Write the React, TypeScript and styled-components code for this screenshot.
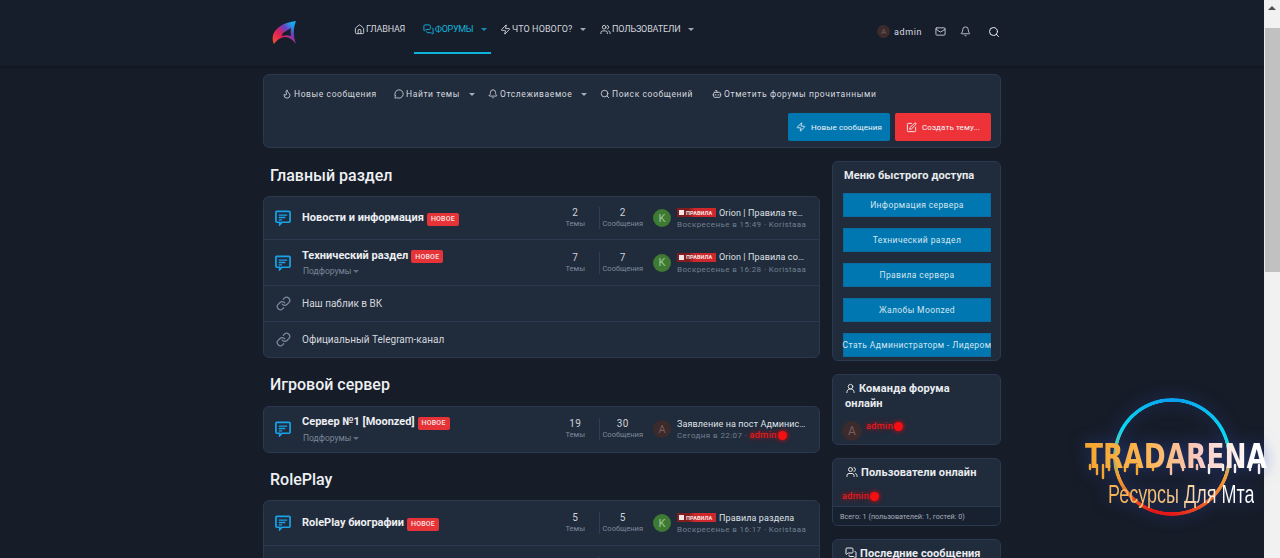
import styled, { createGlobalStyle } from 'styled-components';
import {
  Bell,
  Bot,
  Flame,
  Home,
  Link,
  Mail,
  MessageCircle,
  MessagesSquare,
  Search,
  SquarePen,
  UserRound,
  Users,
  Zap,
} from 'lucide-react';

const GlobalStyle = createGlobalStyle`
  html, body {
    height: 100%;
    overflow: hidden;
    background: #161c28;
  }
  body {
    margin: 0;
    font-family: Roboto, "Liberation Sans", sans-serif;
    color: #e6e8ec;
  }
  * { box-sizing: border-box; }
  svg { flex: none; }
`;

const Shell = styled.div`
  height: 100vh;
  display: flex;
  overflow: hidden;
`;

const Viewport = styled.div`
  flex: 1;
  min-width: 0;
  overflow: hidden;
`;

const ScrollTrack = styled.div`
  flex: none;
  width: 16px;
  background: #f1f1f1;
  display: flex;
  flex-direction: column;
  align-items: flex-end;
`;

const ScrollArrow = styled.div`
  height: 28px;
  width: 100%;
  padding: 6px 0 0 4px;
  &::before {
    content: '';
    display: block;
    width: 0;
    height: 0;
    border-left: 4px solid transparent;
    border-right: 4px solid transparent;
    border-bottom: 4px solid #505050;
  }
`;

const ScrollThumb = styled.div`
  width: 15px;
  height: 244px;
  background: #c1c1c1;
`;

const Header = styled.header`
  height: 66px;
  background: #171e2b;
  box-shadow: 0 1px 3px rgba(0, 0, 0, 0.35);
`;

const Inner = styled.div`
  width: 738px;
  margin: 0 auto;
`;

const HeaderInner = styled(Inner)`
  height: 100%;
  display: flex;
  align-items: flex-start;
`;

const Logo = styled.div`
  width: 82px;
  padding: 20px 0 0 8px;
`;

const Nav = styled.nav`
  display: flex;
  height: 54px;
`;

const NavItem = styled.div<{ $active?: boolean; $width: number; $spacing?: number }>`
  width: ${({ $width }) => $width}px;
  height: 54px;
  padding: 24px 0 0 9px;
  display: flex;
  align-items: flex-start;
  gap: 1px;
  font-size: 9px;
  line-height: 11px;
  letter-spacing: ${({ $spacing }) => $spacing ?? 0}px;
  white-space: nowrap;
  text-transform: uppercase;
  color: ${({ $active }) => ($active ? '#10b4dc' : '#d3d6dc')};
  border-bottom: ${({ $active }) => ($active ? '2px solid #0bb4d8' : '0')};
`;

const Caret = styled.span<{ $left?: number; $top?: number }>`
  display: inline-block;
  flex: none;
  width: 0;
  height: 0;
  margin-left: ${({ $left }) => $left ?? 7}px;
  margin-top: ${({ $top }) => $top ?? 4}px;
  border-left: 3px solid transparent;
  border-right: 3px solid transparent;
  border-top: 3px solid currentColor;
  opacity: 0.75;
`;

const UserMenu = styled.div`
  margin-left: auto;
  padding: 25px 1px 0 0;
  width: 124px;
  display: flex;
  align-items: center;
  color: #c9ccd3;
`;

const UserName = styled.span`
  margin: 0 13px 0 4px;
  font-size: 9px;
  letter-spacing: 0.6px;
  color: #d9dbe0;
`;

const BellSlot = styled.span`
  display: flex;
  margin-left: 14px;
`;

const SearchSlot = styled.span`
  display: flex;
  margin-left: auto;
  color: #eceef1;
`;

const Avatar = styled.span<{ $size: number; $green?: boolean }>`
  flex: none;
  width: ${({ $size }) => $size}px;
  height: ${({ $size }) => $size}px;
  border-radius: 50%;
  display: inline-flex;
  align-items: center;
  justify-content: center;
  font-size: ${({ $size }) => Math.round($size * 0.62)}px;
  background: ${({ $green }) => ($green ? '#3e7a33' : '#3b2b2c')};
  color: ${({ $green }) => ($green ? '#9cc595' : '#7c5c5b')};
`;

const Page = styled(Inner)`
  padding: 8px 0 40px;
`;

const Toolbar = styled.div`
  height: 74px;
  padding: 12px 9px 0 18px;
  background: #202b3c;
  border: 1px solid #2b3950;
  border-radius: 6px;
  display: flex;
  flex-direction: column;
`;

const ToolLinks = styled.div`
  display: flex;
  align-items: center;
  height: 14px;
`;

const ToolLink = styled.div<{ $width: number }>`
  width: ${({ $width }) => $width}px;
  display: flex;
  align-items: center;
  gap: 2px;
  font-size: 8.5px;
  letter-spacing: 0.6px;
  white-space: nowrap;
  color: #d6d9df;
`;

const ToolButtons = styled.div`
  margin-top: 12px;
  display: flex;
  justify-content: flex-end;
  gap: 5px;
`;

const ActionButton = styled.div<{ $red?: boolean }>`
  height: 28px;
  width: ${({ $red }) => ($red ? 96 : 102)}px;
  display: flex;
  align-items: center;
  justify-content: center;
  gap: 5px;
  border-radius: 2px;
  font-size: 8px;
  letter-spacing: 0.1px;
  white-space: nowrap;
  color: #f0f4f8;
  background: ${({ $red }) => ($red ? '#ed3338' : '#0077b0')};
`;

const Columns = styled.div`
  display: flex;
  gap: 12px;
  align-items: flex-start;
`;

const Main = styled.main`
  width: 557px;
  padding-top: 14.5px;
`;

const Side = styled.aside`
  width: 169px;
  margin-top: 13px;
  display: flex;
  flex-direction: column;
  gap: 13px;
`;

const SectionTitle = styled.h2`
  margin: 0 0 7.5px 7px;
  font-size: 16px;
  line-height: 26px;
  font-weight: 500;
  color: #eef0f3;
`;

const Panel = styled.section`
  margin-bottom: 14px;
  background: #202b3c;
  border: 1px solid #2b3950;
  border-radius: 6px;
`;

const Row = styled.div<{ $height: number }>`
  height: ${({ $height }) => $height}px;
  display: flex;
  align-items: center;
  & + & {
    border-top: 1px solid #2b3950;
  }
`;

const RowIcon = styled.div`
  flex: none;
  width: 38px;
  padding-left: 11px;
  display: flex;
  color: #18a4ea;
`;

const LinkIcon = styled(RowIcon)`
  padding-left: 12px;
  color: #7d8a9f;
`;

const RowMain = styled.div`
  flex: 1;
  min-width: 0;
`;

const ForumTitle = styled.div`
  display: flex;
  align-items: center;
  gap: 3px;
  font-size: 11px;
  line-height: 14px;
  font-weight: 700;
  color: #eceef1;
`;

const NewBadge = styled.span`
  padding: 0 4px;
  height: 13px;
  margin-top: 2px;
  display: inline-flex;
  align-items: center;
  border-radius: 2px;
  font-size: 7px;
  font-weight: 500;
  letter-spacing: 0.2px;
  color: #f6e4e4;
  background: #e63337;
`;

const SubForums = styled.div`
  display: flex;
  margin-top: 2px;
  padding-left: 1px;
  font-size: 8.5px;
  line-height: 12px;
  color: #7a8698;
`;

const PlainLink = styled.div`
  font-size: 10px;
  color: #d4d7dc;
`;

const Stats = styled.div`
  flex: none;
  width: 94px;
  display: flex;
`;

const Stat = styled.div`
  flex: 1;
  text-align: center;
  & + & {
    border-left: 1px solid #2f3e56;
  }
`;

const StatValue = styled.div`
  font-size: 10px;
  line-height: 12px;
  letter-spacing: 0.4px;
  color: #cfd2d8;
`;

const StatLabel = styled.div`
  font-size: 7.5px;
  line-height: 10px;
  color: #7e8a9b;
`;

const LastPost = styled.div`
  flex: none;
  width: 173px;
  padding: 0 13px 0 7px;
  display: flex;
  align-items: center;
  gap: 6px;
`;

const LastText = styled.div`
  min-width: 0;
  flex: 1;
`;

const LastTitle = styled.div`
  display: flex;
  align-items: center;
  gap: 3px;
  height: 13px;
  font-size: 9px;
  letter-spacing: 0.1px;
  color: #dfe1e5;
  white-space: nowrap;
`;

const Ellipsis = styled.span`
  min-width: 0;
  overflow: hidden;
  text-overflow: ellipsis;
`;

const RuleTag = styled.span`
  flex: none;
  width: 39px;
  height: 9px;
  display: flex;
  align-items: center;
  gap: 2px;
  padding-left: 2px;
  font-size: 5.5px;
  font-weight: 700;
  color: #f5e6e6;
  background: linear-gradient(90deg, #7f1d1f 0 30%, #cf282c 45%);
`;

const RuleMark = styled.i`
  width: 5px;
  height: 5px;
  background: #f1e4e4;
`;

const LastMeta = styled.div`
  display: flex;
  align-items: center;
  font-size: 8px;
  line-height: 11px;
  letter-spacing: 0.4px;
  color: #72808f;
  white-space: nowrap;
`;

const RedName = styled.span`
  display: inline-flex;
  align-items: center;
  gap: 1px;
  font-size: 9px;
  line-height: 11px;
  color: #ff1a1a;
  letter-spacing: 0.4px;
  text-shadow: 0 0 5px #f00;
`;

const VerifiedDot = styled.i`
  width: 9px;
  height: 9px;
  border-radius: 50%;
  background: #f40f12;
  box-shadow: 0 0 5px #f00;
`;

const SidePanel = styled.section`
  background: #202b3c;
  border: 1px solid #2b3950;
  border-radius: 6px;
  overflow: hidden;
`;

const SideTitle = styled.h3<{ $inset?: number }>`
  margin: 0;
  padding: 6px 12px 0 ${({ $inset }) => $inset ?? 11}px;
  font-size: 11px;
  line-height: 15px;
  font-weight: 700;
  letter-spacing: 0.1px;
  color: #e9ebee;
  svg {
    vertical-align: -2px;
    margin-right: 3px;
  }
`;

const QuickList = styled.div`
  padding: 10px 9px 3px 10px;
  display: flex;
  flex-direction: column;
  gap: 10.6px;
`;

const QuickLink = styled.div`
  height: 24.4px;
  display: flex;
  align-items: center;
  justify-content: center;
  font-size: 8.5px;
  letter-spacing: 0.38px;
  white-space: nowrap;
  color: #d5e6f0;
  background: #0077b0;
  border: 1px solid #0a6c9e;
`;

const TeamRow = styled.div`
  padding: 10px 0 3px 9px;
  display: flex;
  align-items: flex-start;
  gap: 4px;
`;

const OnlineRow = styled.div`
  padding: 11px 0 4px 9px;
  display: flex;
`;

const FootNote = styled.div`
  height: 19px;
  padding-left: 7px;
  display: flex;
  align-items: center;
  font-size: 7.2px;
  white-space: nowrap;
  color: #a6adb9;
  background: #182130;
  border-top: 1px solid #2b3950;
`;

const Watermark = styled.div`
  position: fixed;
  right: 15px;
  top: 395px;
  width: 180px;
  height: 130px;
  filter: drop-shadow(0 0 8px rgba(50, 80, 190, 0.55));
`;

const Ring = styled.div`
  position: absolute;
  left: 28px;
  top: 3px;
  width: 118px;
  height: 118px;
  border-radius: 50%;
  background: conic-gradient(#0a9df0 0deg, #08d8f0 70deg, #f2a13a 110deg, #e41818 180deg, #e41818 200deg, #f0a030 250deg, #08d8f0 300deg, #0a9df0 360deg);
  mask: radial-gradient(circle, transparent 55px, #000 55.5px);
`;

const Drips = styled.svg`
  position: absolute;
  left: 0;
  top: 40px;
`;

const BrandText = styled.div`
  position: absolute;
  left: 0;
  top: 44px;
  font-family: "DejaVu Sans", sans-serif;
  font-size: 33px;
  line-height: 36px;
  font-weight: 700;
  white-space: nowrap;
  color: transparent;
  transform: scaleX(0.8);
  transform-origin: left center;
  background: linear-gradient(90deg, #f6a52e 0%, #fbb655 35%, #f9c9c0 62%, #ffffff 92%);
  -webkit-background-clip: text;
  background-clip: text;
`;

const BrandSub = styled.div`
  position: absolute;
  left: 23px;
  top: 84px;
  font-family: "Liberation Sans", sans-serif;
  font-size: 25px;
  line-height: 30px;
  white-space: nowrap;
  color: transparent;
  transform: scaleX(0.72);
  transform-origin: left center;
  background: linear-gradient(90deg, #f8b24b 0%, #f6c98e 50%, #ffffff 85%);
  -webkit-background-clip: text;
  background-clip: text;
`;

function ChatIcon() {
  return (
    <svg width="16" height="16" viewBox="0 0 17 17" fill="none" stroke="currentColor" strokeWidth="1.8">
      <path d="M2 1.5h13a1 1 0 0 1 1 1v9.5a1 1 0 0 1-1 1H7.5L5 15.6V13H2a1 1 0 0 1-1-1V2.5a1 1 0 0 1 1-1Z" />
      <path d="M4 5.5h9M4 8h7M4 10.5h3.5" strokeWidth="1.4" />
    </svg>
  );
}

function BrandLogo() {
  return (
    <svg width="26" height="25" viewBox="0 0 26 25">
      <defs>
        <linearGradient id="logoFill" x1="0" y1="1" x2="1" y2="0">
          <stop offset="0" stopColor="#f4542c" />
          <stop offset="0.38" stopColor="#e01f58" />
          <stop offset="0.62" stopColor="#6a3fc0" />
          <stop offset="0.85" stopColor="#14a8ee" />
        </linearGradient>
      </defs>
      <path
        fillRule="evenodd"
        fill="url(#logoFill)"
        d="M25 1C16 2 9 5 5 10 1 14 1 20 3 24 6 20 10 17 14 17 18 17 22 20 25 24 22 16 22 8 25 1ZM20 8 12 13 10.5 16C14 15 17 15 20 16 19.5 13 19.5 11 20 8Z"
      />
    </svg>
  );
}

type Forum = {
  title: string;
  height: number;
  sub?: boolean;
  themes: string;
  posts: string;
  last: string;
  rule?: boolean;
  meta: string;
  author: string;
};

function ForumRow({ forum }: { forum: Forum }) {
  const isAdmin = forum.author === 'admin';
  return (
    <Row $height={forum.height}>
      <RowIcon>
        <ChatIcon />
      </RowIcon>
      <RowMain>
        <ForumTitle>
          {forum.title}
          <NewBadge>НОВОЕ</NewBadge>
        </ForumTitle>
        {forum.sub && (
          <SubForums>
            Подфорумы
            <Caret $left={2} $top={5} />
          </SubForums>
        )}
      </RowMain>
      <Stats>
        <Stat>
          <StatValue>{forum.themes}</StatValue>
          <StatLabel>Темы</StatLabel>
        </Stat>
        <Stat>
          <StatValue>{forum.posts}</StatValue>
          <StatLabel>Сообщения</StatLabel>
        </Stat>
      </Stats>
      <LastPost>
        <Avatar $size={18} $green={!isAdmin}>
          {isAdmin ? 'A' : 'K'}
        </Avatar>
        <LastText>
          <LastTitle>
            {forum.rule && (
              <RuleTag>
                <RuleMark />
                ПРАВИЛА
              </RuleTag>
            )}
            <Ellipsis>{forum.last}</Ellipsis>
          </LastTitle>
          <LastMeta>
            {forum.meta}&nbsp;·&nbsp;
            {isAdmin ? (
              <RedName>
                admin
                <VerifiedDot />
              </RedName>
            ) : (
              forum.author
            )}
          </LastMeta>
        </LastText>
      </LastPost>
    </Row>
  );
}

const mainForums: Forum[] = [
  { title: 'Новости и информация', height: 42, themes: '2', posts: '2', last: 'Orion | Правила технического раздела', rule: true, meta: 'Воскресенье в 15:49', author: 'Koristaaa' },
  { title: 'Технический раздел', height: 46, sub: true, themes: '7', posts: '7', last: 'Orion | Правила создания тем', rule: true, meta: 'Воскресенье в 16:28', author: 'Koristaaa' },
];

const serverForum: Forum = { title: 'Сервер №1 [Moonzed]', height: 45, sub: true, themes: '19', posts: '30', last: 'Заявление на пост Администратора сервера', meta: 'Сегодня в 22:07', author: 'admin' };

const rpForums: Forum[] = [
  { title: 'RolePlay биографии', height: 44, themes: '5', posts: '5', last: 'Правила раздела', rule: true, meta: 'Воскресенье в 16:17', author: 'Koristaaa' },
  { title: 'Лидеры', height: 44, themes: '4', posts: '4', last: 'Правила Лидеры', rule: true, meta: 'Воскресенье в 16:20', author: 'Koristaaa' },
];

const quickLinks = ['Информация сервера', 'Технический раздел', 'Правила сервера', 'Жалобы Moonzed', 'Стать Администраторм - Лидером'];

// x, length of the paint runs under the logo word
const dripMarks = [
  [5, 4], [12, 9], [18, 13], [24, 5], [40, 6], [52, 9], [68, 5],
  [86, 9], [98, 5], [112, 4], [124, 8], [138, 5], [150, 7], [165, 5], [174, 8],
];

export default function App() {
  return (
    <Shell>
      <GlobalStyle />
      <Viewport>
        <Header>
          <HeaderInner>
            <Logo>
              <BrandLogo />
            </Logo>
            <Nav>
              <NavItem $width={69} $spacing={-0.2}>
                <Home size={11} />
                Главная
              </NavItem>
              <NavItem $active $width={77} $spacing={-0.3}>
                <MessagesSquare size={11} />
                Форумы
                <Caret />
              </NavItem>
              <NavItem $width={100} $spacing={0.1}>
                <Zap size={11} />
                Что нового?
                <Caret />
              </NavItem>
              <NavItem $width={112} $spacing={-0.15}>
                <Users size={11} />
                Пользователи
                <Caret />
              </NavItem>
            </Nav>
            <UserMenu>
              <Avatar $size={13}>A</Avatar>
              <UserName>admin</UserName>
              <Mail size={11} />
              <BellSlot>
                <Bell size={11} />
              </BellSlot>
              <SearchSlot>
                <Search size={12} />
              </SearchSlot>
            </UserMenu>
          </HeaderInner>
        </Header>
        <Page>
          <Toolbar>
            <ToolLinks>
              <ToolLink $width={112}>
                <Flame size={10} />
                Новые сообщения
              </ToolLink>
              <ToolLink $width={94}>
                <MessageCircle size={10} />
                Найти темы
                <Caret $top={0} />
              </ToolLink>
              <ToolLink $width={112}>
                <Bell size={10} />
                Отслеживаемое
                <Caret $top={0} />
              </ToolLink>
              <ToolLink $width={112}>
                <Search size={10} />
                Поиск сообщений
              </ToolLink>
              <ToolLink $width={170}>
                <Bot size={10} />
                Отметить форумы прочитанными
              </ToolLink>
            </ToolLinks>
            <ToolButtons>
              <ActionButton>
                <Zap size={10} />
                Новые сообщения
              </ActionButton>
              <ActionButton $red>
                <SquarePen size={11} />
                Создать тему...
              </ActionButton>
            </ToolButtons>
          </Toolbar>
          <Columns>
            <Main>
              <SectionTitle>Главный раздел</SectionTitle>
              <Panel>
                {mainForums.map((f) => (
                  <ForumRow key={f.title} forum={f} />
                ))}
                <Row $height={36}>
                  <LinkIcon>
                    <Link size={15} />
                  </LinkIcon>
                  <PlainLink>Наш паблик в ВК</PlainLink>
                </Row>
                <Row $height={36}>
                  <LinkIcon>
                    <Link size={15} />
                  </LinkIcon>
                  <PlainLink>Официальный Telegram-канал</PlainLink>
                </Row>
              </Panel>
              <SectionTitle>Игровой сервер</SectionTitle>
              <Panel>
                <ForumRow forum={serverForum} />
              </Panel>
              <SectionTitle>RolePlay</SectionTitle>
              <Panel>
                {rpForums.map((f) => (
                  <ForumRow key={f.title} forum={f} />
                ))}
              </Panel>
            </Main>
            <Side>
              <SidePanel>
                <SideTitle>Меню быстрого доступа</SideTitle>
                <QuickList>
                  {quickLinks.map((l) => (
                    <QuickLink key={l}>{l}</QuickLink>
                  ))}
                </QuickList>
              </SidePanel>
              <SidePanel>
                <SideTitle $inset={12}>
                  <UserRound size={11} />
                  Команда форума
                  <br />
                  онлайн
                </SideTitle>
                <TeamRow>
                  <Avatar $size={20}>A</Avatar>
                  <RedName>
                    admin
                    <VerifiedDot />
                  </RedName>
                </TeamRow>
              </SidePanel>
              <SidePanel>
                <SideTitle $inset={13}>
                  <Users size={12} />
                  Пользователи онлайн
                </SideTitle>
                <OnlineRow>
                  <RedName>
                    admin
                    <VerifiedDot />
                  </RedName>
                </OnlineRow>
                <FootNote>Всего: 1 (пользователей: 1, гостей: 0)</FootNote>
              </SidePanel>
              <SidePanel>
                <SideTitle $inset={12}>
                  <MessagesSquare size={12} />
                  Последние сообщения
                </SideTitle>
              </SidePanel>
            </Side>
          </Columns>
        </Page>
      </Viewport>
      <ScrollTrack>
        <ScrollArrow />
        <ScrollThumb />
      </ScrollTrack>
      <Watermark>
        <Ring />
        <Drips width="180" height="50" viewBox="0 0 180 50">
          {dripMarks.map(([x, len]) => (
            <path
              key={x}
              d={`M${x} 30v${len}`}
              stroke={x < 70 ? '#f6a52e' : x < 120 ? '#f9c0a8' : '#f4f0f4'}
              strokeWidth="2.4"
              strokeLinecap="round"
            />
          ))}
        </Drips>
        <BrandText>TRADARENA</BrandText>
        <BrandSub>Ресурсы Для Мта</BrandSub>
      </Watermark>
    </Shell>
  );
}
